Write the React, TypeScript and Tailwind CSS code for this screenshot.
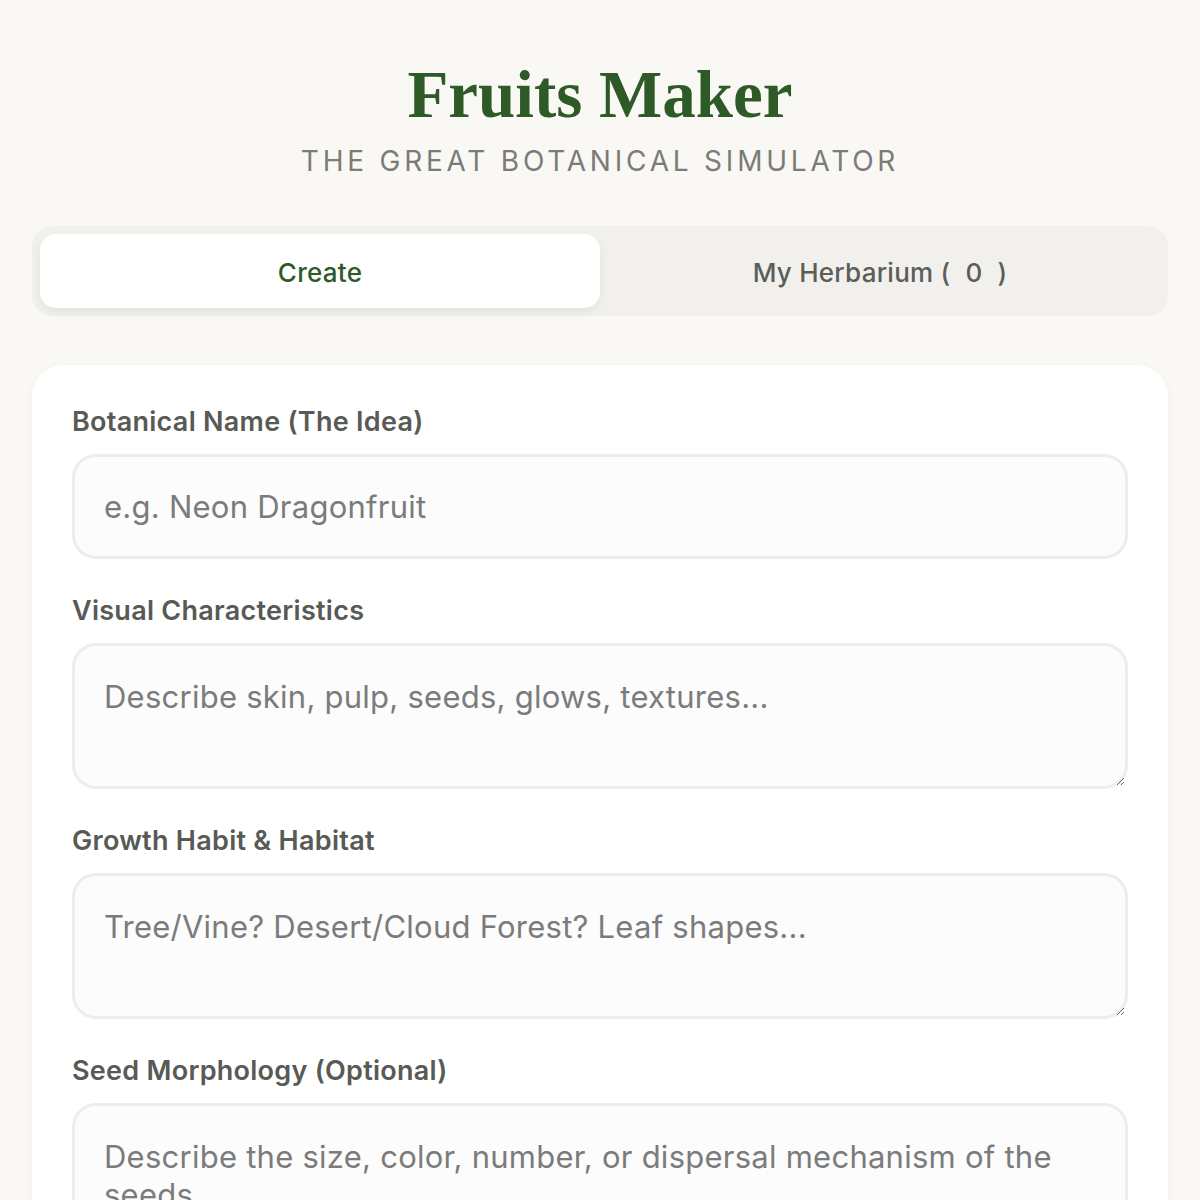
import { useState } from "react";

const fields = [
  {
    label: "Visual Characteristics",
    placeholder: "Describe skin, pulp, seeds, glows, textures...",
  },
  {
    label: "Growth Habit & Habitat",
    placeholder: "Tree/Vine? Desert/Cloud Forest? Leaf shapes...",
  },
  {
    label: "Seed Morphology (Optional)",
    placeholder:
      "Describe the size, color, number, or dispersal mechanism of the seeds.",
  },
];

export default function App() {
  const [tab, setTab] = useState<"create" | "herbarium">("create");
  const count = 0;

  return (
    <div
      className="min-h-screen bg-[#f9f8f4] px-8 pt-[58px] pb-16"
      style={{ fontFamily: "Inter, 'Open Sans', sans-serif" }}
    >
      {/* Header */}
      <header className="text-center">
        <h1
          className="text-[67px] font-bold leading-[72px] text-[#2d5a27]"
          style={{ fontFamily: "'Liberation Serif', 'DejaVu Serif', serif" }}
        >
          Fruits Maker
        </h1>
        <p className="mt-[13px] text-[28px] leading-[36px] tracking-[0.135em] text-[#7b7c77]">
          THE GREAT BOTANICAL SIMULATOR
        </p>
      </header>

      {/* Tabs */}
      <nav className="mt-[47px] flex rounded-[20px] bg-[#f1f0ec] p-2">
        <button
          type="button"
          onClick={() => setTab("create")}
          className={
            tab === "create"
              ? "h-[74px] flex-1 rounded-[16px] bg-white pt-[3px] text-[26px] font-medium tracking-[0.01em] text-[#2d5a27] shadow-[0_4px_10px_rgba(0,0,0,0.06)]"
              : "h-[74px] flex-1 rounded-[16px] pt-[3px] text-[26px] font-medium tracking-[0.01em] text-[#5b5d58]"
          }
        >
          Create
        </button>
        <button
          type="button"
          onClick={() => setTab("herbarium")}
          className={
            tab === "herbarium"
              ? "h-[74px] flex-1 rounded-[16px] bg-white pt-[3px] text-[26px] font-medium tracking-[0.01em] text-[#2d5a27] shadow-[0_4px_10px_rgba(0,0,0,0.06)]"
              : "h-[74px] flex-1 rounded-[16px] pt-[3px] text-[26px] font-medium tracking-[0.01em] text-[#5b5d58]"
          }
        >
          My Herbarium (<span className="px-[15px]">{count}</span>)
        </button>
      </nav>

      {/* Form card */}
      <main className="mt-[49px] rounded-[32px] bg-white px-10 pt-[39px] pb-10 shadow-[0_2px_12px_rgba(0,0,0,0.03)]">
        <label className="block text-[27px] font-semibold leading-[36px] tracking-[0.01em] text-[#575a55]">
          Botanical Name (The Idea)
        </label>
        <input
          type="text"
          placeholder="e.g. Neon Dragonfruit"
          className="mt-[14px] h-[105px] w-full rounded-[24px] border-[3px] border-[#eeedea] bg-[#fcfcfc] px-[29px] text-[31px] tracking-[0.008em] text-[#333] outline-none placeholder:text-[#7b7b7b]"
        />

        {fields.map((f) => (
          <div key={f.label} className="mt-[34px]">
            <label className="block text-[27px] font-semibold leading-[36px] tracking-[0.01em] text-[#575a55]">
              {f.label}
            </label>
            <textarea
              placeholder={f.placeholder}
              className="mt-[14px] block h-[146px] w-full rounded-[24px] border-[3px] border-[#eeedea] bg-[#fcfcfc] px-[29px] py-[32px] text-[31px] leading-[38px] tracking-[0.008em] text-[#333] outline-none placeholder:text-[#7b7b7b]"
            />
          </div>
        ))}
      </main>
    </div>
  );
}
